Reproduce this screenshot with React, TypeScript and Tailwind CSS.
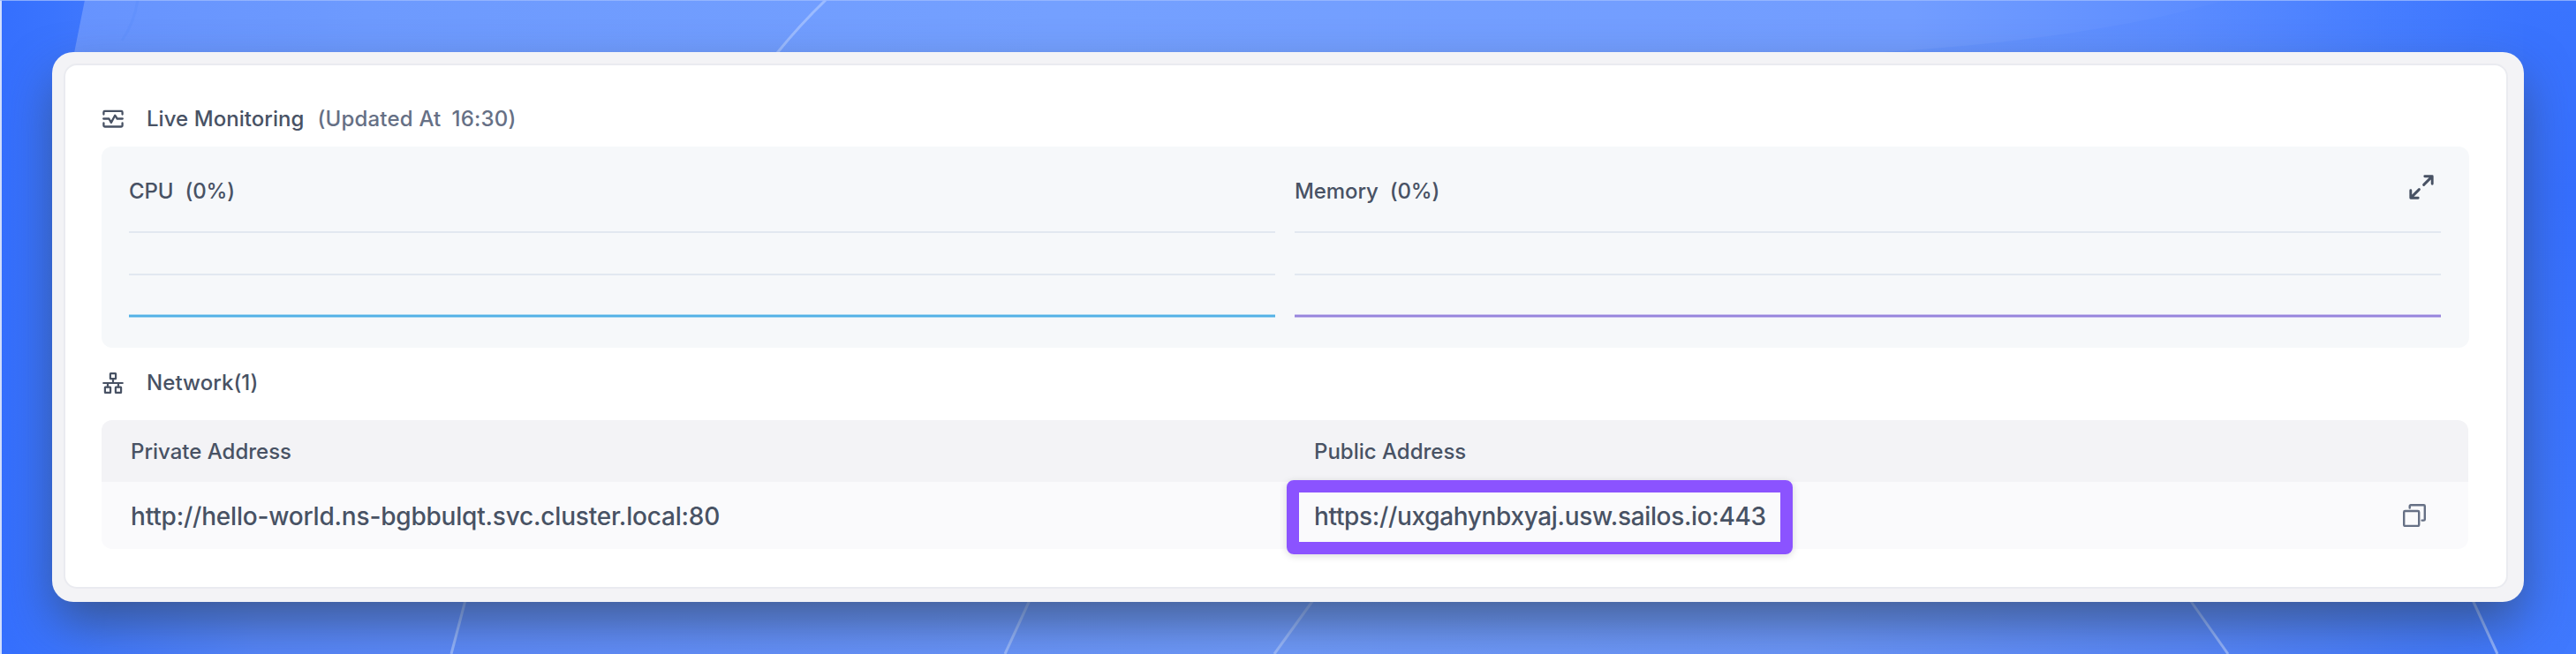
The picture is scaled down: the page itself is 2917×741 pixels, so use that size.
import React from "react";

function Backdrop() {
  return (
    <svg
      className="pointer-events-none absolute inset-0 h-full w-full"
      viewBox="0 0 2917 741"
      preserveAspectRatio="none"
    >
      <defs>
        <linearGradient id="base" x1="0" x2="1" y1="0" y2="0">
          <stop offset="0" stopColor="#356ffe" />
          <stop offset="0.02" stopColor="#3a74fe" />
          <stop offset="0.1" stopColor="#5686fb" />
          <stop offset="0.2" stopColor="#5f8cfb" />
          <stop offset="0.5" stopColor="#709bfc" />
          <stop offset="0.7" stopColor="#6c97fb" />
          <stop offset="0.85" stopColor="#5887fa" />
          <stop offset="0.95" stopColor="#4279fb" />
          <stop offset="1" stopColor="#3f78fe" />
        </linearGradient>
        <linearGradient id="sheen" x1="0" x2="1" y1="0" y2="0">
          <stop offset="0" stopColor="#6693fe" />
          <stop offset="0.12" stopColor="#6d9afe" />
          <stop offset="0.4" stopColor="#74a0ff" />
          <stop offset="0.75" stopColor="#729dff" />
          <stop offset="0.86" stopColor="#5e8eff" />
          <stop offset="0.94" stopColor="#477eff" />
          <stop offset="1" stopColor="#3a74fe" />
        </linearGradient>
        <linearGradient id="edge" x1="0" x2="0" y1="0" y2="1">
          <stop offset="0" stopColor="#3a74fe" />
          <stop offset="0.3" stopColor="#366ffe" />
          <stop offset="1" stopColor="#4079fe" />
        </linearGradient>
        <linearGradient id="arc" x1="0" x2="1" y1="0" y2="0">
          <stop offset="0" stopColor="#3f79ff" stopOpacity="0.22" />
          <stop offset="1" stopColor="#3f79ff" stopOpacity="0" />
        </linearGradient>
      </defs>
      <rect width="2917" height="741" fill="url(#base)" />
      <path d="M96 0H2858V80H80Z" fill="url(#sheen)" />
      <path d="M156 0Q152 26 138 46" stroke="#5f8ffc" strokeWidth="3" fill="none" opacity="0.6" />
      <rect x="2857" width="60" height="741" fill="url(#edge)" />
      <path d="M2520 0Q2360 48 2080 62H2857V0Z" fill="url(#arc)" />
      <g stroke="#a9c4ff" strokeWidth="3" fill="none" opacity="0.75">
        <path d="M935 0Q906 28 880 60" />
        <path d="M527 680L511 741" />
        <path d="M1166 680L1138 741" />
        <path d="M1487 680L1443 741" />
        <path d="M2480 680L2523 741" />
        <path d="M2800 680L2828 741" />
      </g>
      <path d="M1 741V0" stroke="#e4ecff" strokeWidth="2" opacity="0.9" />
      <path d="M0 0.5H2917" stroke="#9dbbff" strokeWidth="1" opacity="0.8" />
    </svg>
  );
}

function MonitorIcon() {
  return (
    <svg className="block h-6 w-6" viewBox="0 0 24 24" fill="none" stroke="#485264" strokeWidth="2.3" strokeLinecap="round" strokeLinejoin="round">
      <path d="M1.4 6.6V4.2a1.3 1.3 0 0 1 1.3-1.3h18.6a1.3 1.3 0 0 1 1.3 1.3v2.4" />
      <path d="M1.4 16.4v2.8a1.3 1.3 0 0 0 1.3 1.3h18.6a1.3 1.3 0 0 0 1.3-1.3v-2.8" />
      <path d="M1.2 11.5h6.2l2.5 4.4 4.3-8.2 2.5 3.8h6.1" />
    </svg>
  );
}

function NetworkIcon() {
  return (
    <svg className="block h-6 w-6" viewBox="0 0 24 24" fill="none" stroke="#485264" strokeWidth="2.2" strokeLinecap="round" strokeLinejoin="round">
      <rect x="8.9" y="1.2" width="6.2" height="6" rx="0.4" />
      <rect x="2.9" y="16.6" width="6.2" height="6.2" rx="0.4" />
      <rect x="14.9" y="16.6" width="6.2" height="6.2" rx="0.4" />
      <path d="M12 7.3v4.6M1.2 12h21.6M6 12v4.4M18 12v4.4" />
    </svg>
  );
}

function ExpandIcon() {
  return (
    <svg className="block h-7 w-7" viewBox="0 0 28 28" fill="none" stroke="#485264" strokeWidth="2.9" strokeLinecap="round" strokeLinejoin="round">
      <path d="M17.8 1.8h8.4v8.4M25.6 2.4L16.6 11.4" />
      <path d="M10.2 26.2H1.8v-8.4M2.4 25.6l9-9" />
    </svg>
  );
}

function CopyIcon() {
  return (
    <svg className="block h-[26px] w-[26px]" viewBox="0 0 26 26" fill="none" stroke="#667085" strokeWidth="2.4" strokeLinecap="round" strokeLinejoin="round">
      <rect x="1.2" y="8" width="17" height="16.9" rx="1.2" />
      <path d="M7.7 4.6V2.4a1.2 1.2 0 0 1 1.2-1.2h14.7a1.2 1.2 0 0 1 1.2 1.2v15a1.2 1.2 0 0 1-1.2 1.2h-2" />
    </svg>
  );
}

function Chart({ name, line }: { name: string; line: string }) {
  return (
    <div className="h-full w-[1298px]">
      <div className="h-24 pt-[34px]">
        <div className="flex gap-[13px] text-[24px] leading-[34px] tracking-[-0.1px]">
          <span>{name}</span>
          <span>(0%)</span>
        </div>
      </div>
      <div className="h-12 border-t-2 border-[#e2e8f0]" />
      <div className="h-[46px] border-t-2 border-[#e2e8f0]" />
      <div className={`h-[4px] border-y ${line}`} />
    </div>
  );
}

export default function App() {
  return (
    <div className="relative h-[741px] w-[2917px] overflow-hidden bg-[#3a74fe] p-[59px] font-['Inter',sans-serif] font-medium text-[#485264]">
      <Backdrop />
      <main className="relative h-[623px] w-[2799px] rounded-[24px] bg-[#f3f3f6] pt-[13px] pl-[13px] shadow-[0_26px_56px_-4px_rgba(50,70,105,0.72)]">
        <div className="h-[595px] w-[2768px] rounded-[15px] border-2 border-[#eaebf0] bg-white pl-[41px]">
          <div className="flex h-[92px] items-center pt-[30px]">
            <div className="ml-px w-[50px]">
              <MonitorIcon />
            </div>
            <span className="text-[24px] leading-8 tracking-[0.05px]">Live Monitoring</span>
            <span className="ml-[15px] text-[24px] leading-8 tracking-[0.2px] text-[#667085]">(Updated At</span>
            <span className="ml-[12px] text-[24px] leading-8 tracking-[0.2px] text-[#667085]">16:30)</span>
          </div>
          <section className="relative flex h-[228px] w-[2681px] gap-[22px] rounded-[12px] bg-[#f6f8fa] pl-[31px]">
            <Chart name="CPU" line="border-[#a5d7f1] bg-[#53b1e6]" />
            <Chart name="Memory" line="border-[#c8bfee] bg-[#9785dc]" />
            <button className="absolute top-[32px] right-[40px]" aria-label="Expand">
              <ExpandIcon />
            </button>
          </section>
          <div className="flex h-[82px] items-center pb-[2px]">
            <div className="ml-px w-[50px] pb-px">
              <NetworkIcon />
            </div>
            <span className="text-[24px] leading-8 tracking-[0.08px]">Network(1)</span>
          </div>
          <section className="h-[146px] w-[2680px] rounded-[12px] bg-[#fafafc]">
            <div className="flex h-[70px] items-center rounded-t-[12px] bg-[#f3f3f6] pt-[2px] pl-[33px] text-[24px]">
              <span className="w-[1340px]">Private Address</span>
              <span>Public Address</span>
            </div>
            <div className="flex h-[76px] items-center pr-[48px] pl-[33px] text-[28px]">
              <span className="w-[1340px] pt-[2px] tracking-[-0.2px]">http://hello-world.ns-bgbbulqt.svc.cluster.local:80</span>
              <span className="relative pt-[2px] tracking-[-0.34px]">
                https://uxgahynbxyaj.usw.sailos.io:443
                <i className="absolute -top-[18px] -left-[31px] h-[84px] w-[573px] rounded-[8px] border-[14px] border-[#8b53ff] shadow-[0_2px_8px_rgba(0,0,0,0.15)]" />
              </span>
              <button className="ml-auto" aria-label="Copy">
                <CopyIcon />
              </button>
            </div>
          </section>
        </div>
      </main>
    </div>
  );
}
